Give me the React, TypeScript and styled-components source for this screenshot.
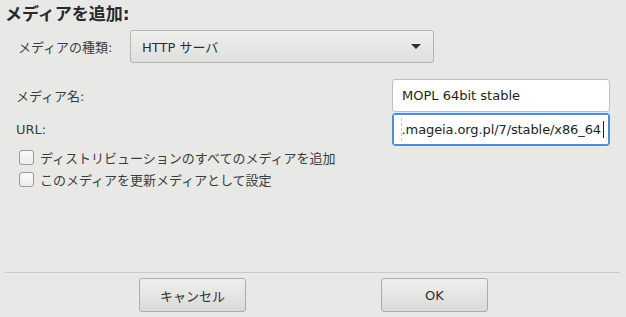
import styled, { createGlobalStyle } from "styled-components";

const Global = createGlobalStyle`
  html, body {
    margin: 0;
    padding: 0;
    background: #e8e8e7;
  }
  body {
    font-family: "DejaVu Sans", "Noto Sans CJK JP", sans-serif;
    font-size: 13px;
    color: #2e3436;
  }
`;

const Dialog = styled.div`
  width: 626px;
  height: 317px;
  display: flex;
  flex-direction: column;
  box-sizing: border-box;
  overflow: hidden;
`;

const Title = styled.div`
  font-size: 17px;
  font-weight: bold;
  color: #2a2a2a;
  padding: 3px 0 0 5px;
  height: 27px;
  box-sizing: border-box;
  line-height: 22px;
`;

const TypeRow = styled.div`
  display: flex;
  align-items: center;
  padding-left: 18px;
  margin-top: 3px;
`;

const Label = styled.div<{ $width?: number }>`
  width: ${(p) => (p.$width ? `${p.$width}px` : "auto")};
  color: #3c3c3c;
  white-space: nowrap;
`;

const Combo = styled.div`
  width: 304px;
  height: 33px;
  box-sizing: border-box;
  border: 1px solid #b4b4b2;
  border-radius: 3px;
  background: linear-gradient(#efefee, #dfdfde);
  display: flex;
  align-items: center;
  justify-content: space-between;
  padding: 0 12px 0 11px;
  color: #2e2e2e;
`;

const Arrow = styled.span`
  width: 0;
  height: 0;
  border-left: 5px solid transparent;
  border-right: 5px solid transparent;
  border-top: 5px solid #2e2e2e;
`;

const EntryRow = styled.div<{ $top: number }>`
  display: flex;
  align-items: center;
  justify-content: space-between;
  padding: 0 16px 0 16px;
  margin-top: ${(p) => p.$top}px;
`;

const Entry = styled.div<{ $focused?: boolean }>`
  position: relative;
  width: 218px;
  height: 33px;
  box-sizing: border-box;
  background: #ffffff;
  border: 1px solid ${(p) => (p.$focused ? "#4a90d9" : "#c0c0be")};
  box-shadow: ${(p) => (p.$focused ? "inset 0 0 0 1px #4a90d9" : "none")};
  border-radius: 3px;
  display: flex;
  align-items: center;
  justify-content: ${(p) => (p.$focused ? "flex-end" : "flex-start")};
  padding: 0 ${(p) => (p.$focused ? "5px" : "9px")};
  overflow: hidden;
  white-space: nowrap;
  color: #1e1e1e;
`;

const UrlText = styled.span`
  letter-spacing: -0.1px;
`;

const ScrollMark = styled.span`
  position: absolute;
  left: 8px;
  top: 4px;
  bottom: 4px;
  border-left: 1px dashed #c8c8c8;
`;

const Caret = styled.span`
  flex: none;
  width: 1px;
  height: 17px;
  background: #1e1e1e;
  margin-left: 2px;
`;

const Checks = styled.div`
  display: flex;
  flex-direction: column;
  gap: 6px;
  padding-left: 19px;
  margin-top: 3px;
`;

const CheckRow = styled.label`
  display: flex;
  align-items: center;
  gap: 6px;
  height: 16px;
  color: #3c3c3c;
`;

const Box = styled.span`
  width: 15px;
  height: 15px;
  box-sizing: border-box;
  border: 1px solid #9a9a98;
  border-radius: 3px;
  background: linear-gradient(#fafafa, #ececeb);
`;

const Spacer = styled.div`
  flex: 1;
`;

const Separator = styled.div`
  height: 1px;
  background: #cacac8;
  margin: 0 6px 0 5px;
`;

const ButtonBar = styled.div`
  display: flex;
  padding: 5px 0 5px 139px;
  gap: 135px;
`;

const Button = styled.div`
  width: 107px;
  height: 34px;
  box-sizing: border-box;
  border: 1px solid #acacaa;
  border-radius: 3px;
  background: linear-gradient(#efefee, #dadad9);
  display: flex;
  align-items: center;
  justify-content: center;
  color: #2e2e2e;
`;

export default function App() {
  return (
    <Dialog>
      <Global />
      <Title>メディアを追加:</Title>
      <TypeRow>
        <Label $width={112}>メディアの種類:</Label>
        <Combo>
          <span>HTTP サーバ</span>
          <Arrow />
        </Combo>
      </TypeRow>
      <EntryRow $top={16}>
        <Label>メディア名:</Label>
        <Entry>MOPL 64bit stable</Entry>
      </EntryRow>
      <EntryRow $top={1}>
        <Label>URL:</Label>
        <Entry $focused>
          <ScrollMark />
          <UrlText>.mageia.org.pl/7/stable/x86_64</UrlText>
          <Caret />
        </Entry>
      </EntryRow>
      <Checks>
        <CheckRow>
          <Box />
          ディストリビューションのすべてのメディアを追加
        </CheckRow>
        <CheckRow>
          <Box />
          このメディアを更新メディアとして設定
        </CheckRow>
      </Checks>
      <Spacer />
      <Separator />
      <ButtonBar>
        <Button>キャンセル</Button>
        <Button>OK</Button>
      </ButtonBar>
    </Dialog>
  );
}
